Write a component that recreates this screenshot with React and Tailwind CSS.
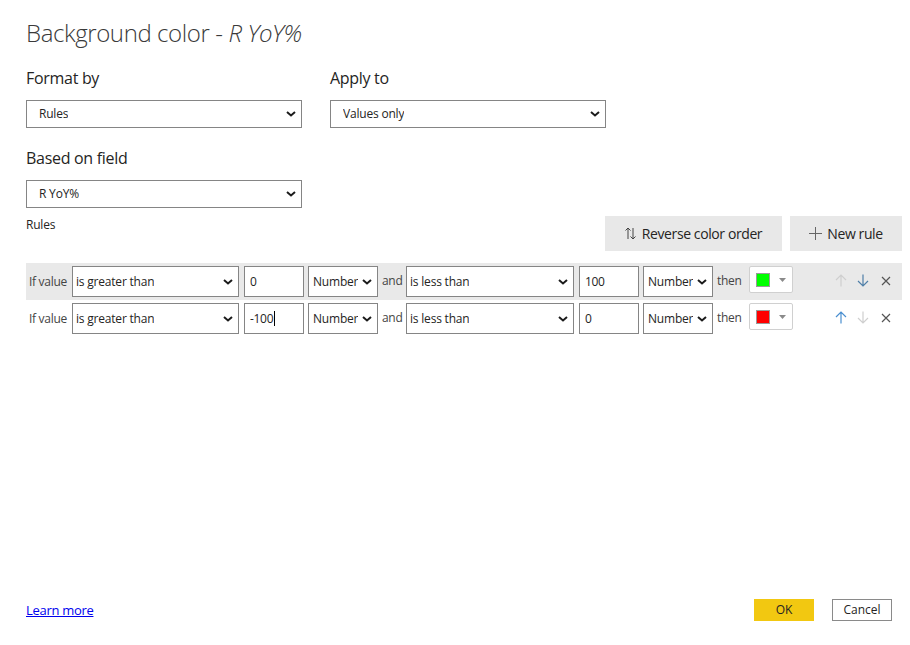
import React from "react";

const Chevron = () => (
  <svg width="10" height="6" viewBox="0 0 10 6" className="shrink-0">
    <path d="M1 1l4 3.5L9 1" fill="none" stroke="#1b1b1b" strokeWidth="2" />
  </svg>
);

const Select = ({ value, className = "", pl = "pl-3" }) => (
  <div
    className={`flex shrink-0 items-center justify-between border border-[#858585] bg-white pr-[5px] ${pl} ${className}`}
  >
    <span className="truncate text-[12px] tracking-[-0.2px] text-[#252423]">{value}</span>
    <Chevron />
  </div>
);

const Input = ({ value, caret }) => (
  <div className="ml-[1px] flex h-[31px] w-[60px] shrink-0 items-center border border-[#858585] bg-white pl-[5px] text-[12px] text-[#252423]">
    {value}
    {caret && <span className="ml-[1px] inline-block h-[15px] w-px bg-black" />}
  </div>
);

const ArrowUp = ({ color }) => (
  <svg width="12" height="13" viewBox="0 0 12 13">
    <path d="M6 12.5V1M1 6l5-5 5 5" fill="none" stroke={color} strokeWidth="1.2" />
  </svg>
);

const ArrowDown = ({ color }) => (
  <svg width="12" height="13" viewBox="0 0 12 13">
    <path d="M6 0.5V12M1 7l5 5 5-5" fill="none" stroke={color} strokeWidth="1.2" />
  </svg>
);

const Close = () => (
  <svg width="10" height="10" viewBox="0 0 10 10">
    <path d="M1 1l8 8M9 1l-8 8" fill="none" stroke="#555" strokeWidth="1.2" />
  </svg>
);

const RuleRow = ({ shaded, from, to, swatch, caret, upOn, downOn }) => (
  <div
    className={`flex items-start gap-[4px] ${shaded ? "bg-[#e9e9e9]" : ""} h-[37px] pt-[3px] pl-[3px] text-[12px] tracking-[-0.3px] text-[#444] whitespace-nowrap`}
  >
    <span className="mt-[7px] w-[39px] shrink-0">If value</span>
    <Select value="is greater than" className="h-[31px] w-[167px]" pl="pl-[3px]" />
    <Input value={from} caret={caret} />
    <Select value="Number" className="h-[31px] w-[70px]" pl="pl-[4px]" />
    <span className="mt-[6px] w-[20px] shrink-0">and</span>
    <Select value="is less than" className="h-[31px] w-[168px]" pl="pl-[3px]" />
    <Input value={to} />
    <Select value="Number" className="h-[31px] w-[70px]" pl="pl-[4px]" />
    <span className="mt-[6px] w-[24px] shrink-0">then</span>
    <div className="ml-[4px] flex h-[27px] w-[44px] shrink-0 items-center gap-[9px] rounded-[2px] border border-[#d0d0d0] bg-white pl-[6px]">
      <span className={`h-[14px] w-[14px] border border-[#9a9a9a] ${swatch}`} />
      <svg width="7" height="4" viewBox="0 0 7 4">
        <path d="M0 0h7L3.5 4z" fill="#8a8a8a" />
      </svg>
    </div>
    <div className="ml-auto mr-[11px] mt-[8px] flex items-center gap-[10px]">
      <ArrowUp color={upOn ? "#4a8fd0" : "#cfcfcf"} />
      <ArrowDown color={downOn ? "#4f7fa8" : "#cfcfcf"} />
      <span className="ml-[2px]">
        <Close />
      </span>
    </div>
  </div>
);

export default function App() {
  return (
    <div className="flex h-screen w-full flex-col bg-white pl-[26px] pr-[8px] font-['Open_Sans',sans-serif] text-[#252423]">
      <h1 className="mt-[16px] text-[24px] leading-[34px] font-light tracking-[-0.4px] text-[#3a3a3a]">
        Background color - <span className="italic">R YoY%</span>
      </h1>

      <div className="mt-[16px] flex gap-[28px]">
        <div className="flex w-[276px] flex-col">
          <span className="text-[16px] leading-[24px] tracking-[-0.3px]">Format by</span>
          <Select value="Rules" className="mt-[10px] h-[28px] w-[276px]" />
        </div>
        <div className="flex w-[276px] flex-col">
          <span className="text-[16px] leading-[24px] tracking-[-0.3px]">Apply to</span>
          <Select value="Values only" className="mt-[10px] h-[28px] w-[276px]" />
        </div>
      </div>

      <div className="mt-[18px] flex flex-col">
        <span className="text-[16px] leading-[24px] tracking-[-0.3px]">Based on field</span>
        <Select value="R YoY%" className="mt-[10px] h-[28px] w-[276px]" />
      </div>

      <div className="mt-[8px] flex items-start justify-between">
        <span className="text-[12px] tracking-[-0.2px]">Rules</span>
        <div className="flex gap-[8px]">
          <button className="flex h-[35px] w-[177px] items-center justify-center gap-[6px] bg-[#e8e8e8] text-[14px] tracking-[-0.4px] text-[#252423]">
            <svg width="11" height="13" viewBox="0 0 11 13">
              <path d="M3 12V1M0.5 3.5L3 1l2.5 2.5M8 1v11M5.5 9.5L8 12l2.5-2.5" fill="none" stroke="#444" strokeWidth="1" />
            </svg>
            Reverse color order
          </button>
          <button className="flex h-[35px] w-[112px] items-center justify-center gap-[5px] bg-[#e8e8e8] text-[14px] tracking-[-0.4px] text-[#252423]">
            <svg width="13" height="13" viewBox="0 0 13 13">
              <path d="M6.5 0v13M0 6.5h13" fill="none" stroke="#666" strokeWidth="1" />
            </svg>
            New rule
          </button>
        </div>
      </div>

      <div className="mt-[12px] flex flex-col">
        <RuleRow shaded from="0" to="100" swatch="bg-[#00ff00]" downOn />
        <RuleRow from="-100" to="0" swatch="bg-[#ff0000]" caret upOn />
      </div>

      <div className="mt-auto mb-[24px] flex items-end justify-between pr-[10px]">
        <a href="#" className="mb-[1px] text-[13px] tracking-[-0.3px] text-[#0000ee] underline">
          Learn more
        </a>
        <div className="flex gap-[18px]">
          <button className="h-[22px] w-[60px] bg-[#f2c811] text-[12px] text-[#252423]">OK</button>
          <button className="h-[22px] w-[60px] border border-[#8a8a8a] bg-white text-[12px] text-[#252423]">
            Cancel
          </button>
        </div>
      </div>
    </div>
  );
}
